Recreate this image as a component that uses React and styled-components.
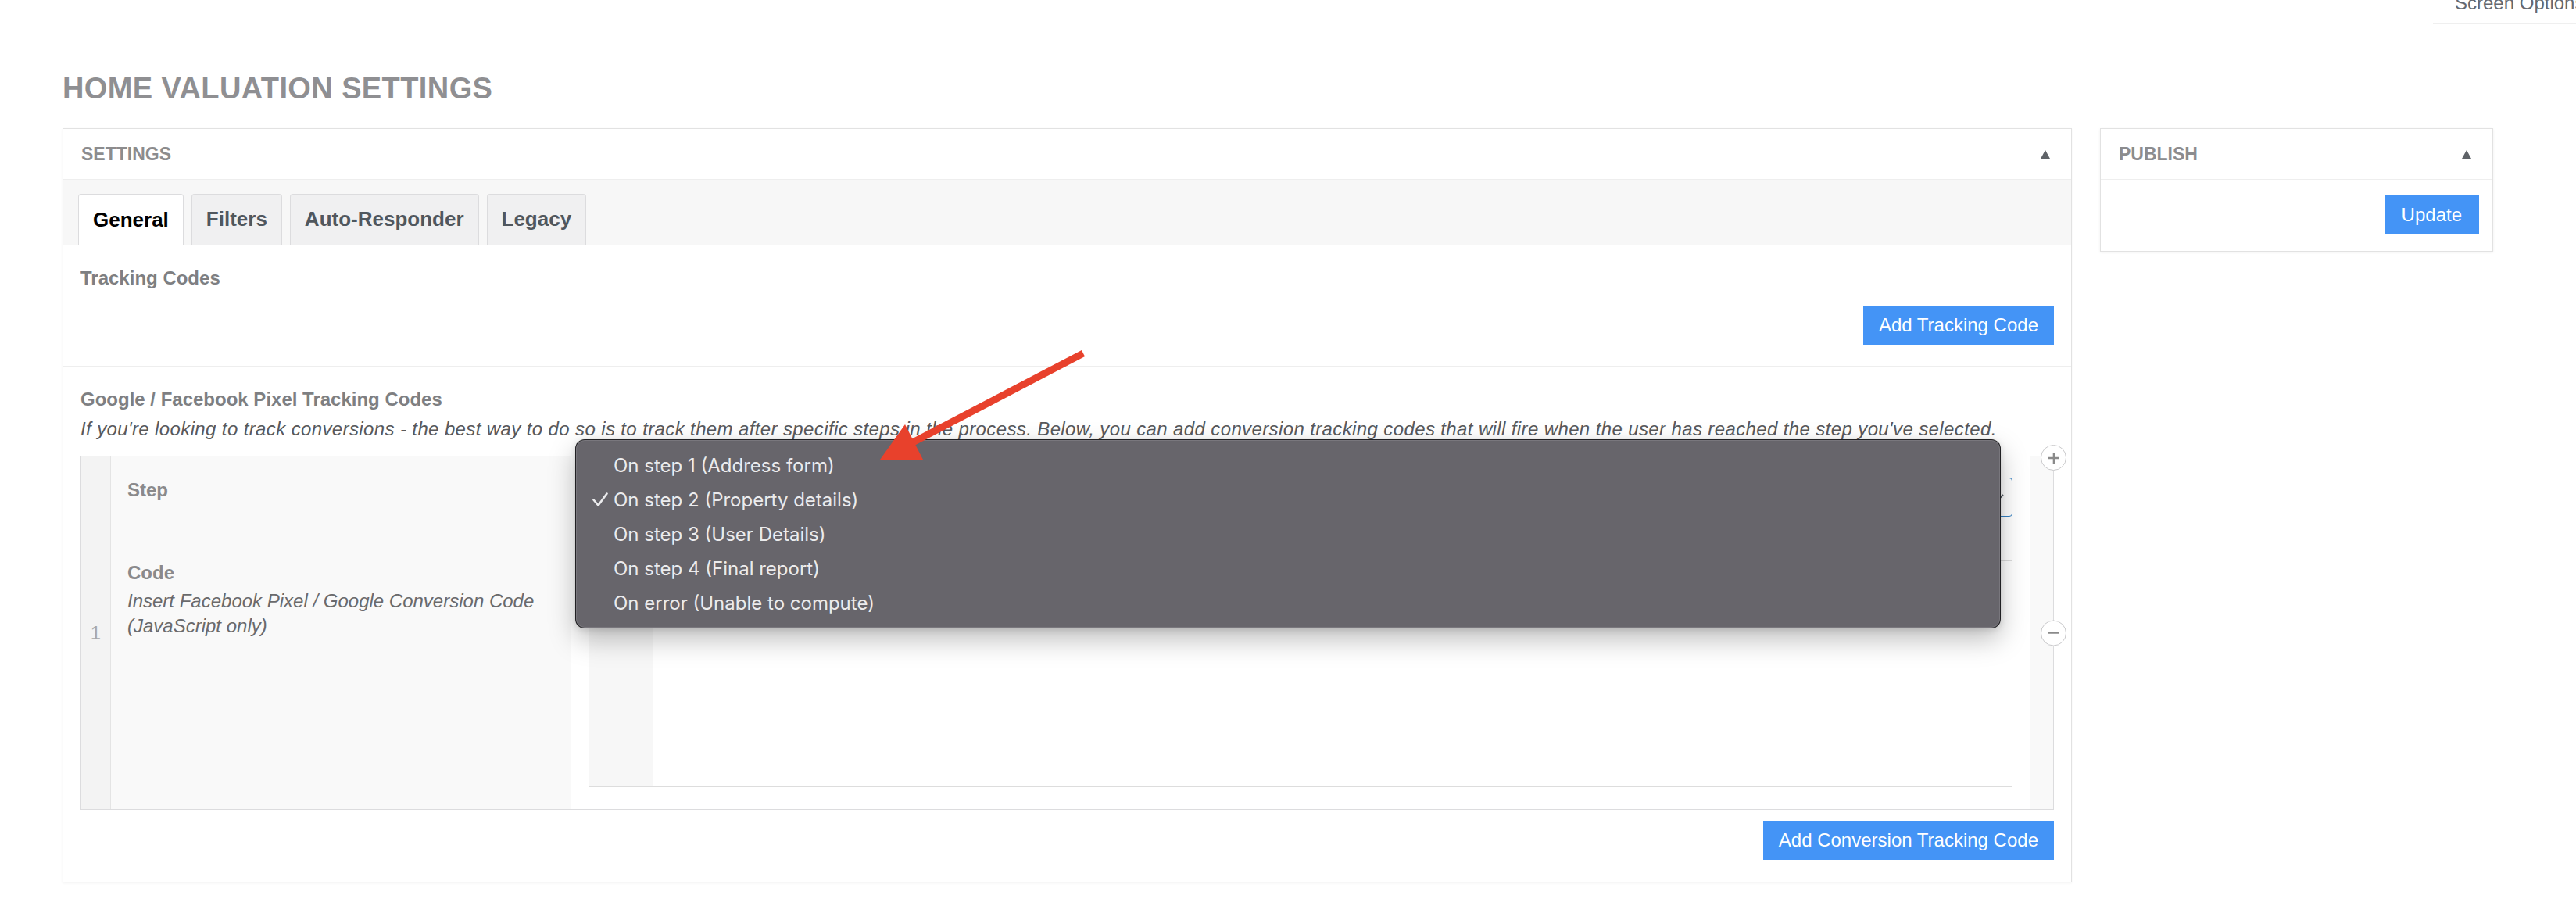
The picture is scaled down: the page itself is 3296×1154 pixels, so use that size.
import styled, { createGlobalStyle } from "styled-components";

const GlobalStyle = createGlobalStyle`
  html, body {
    margin: 0;
    padding: 0;
    background: #fff;
    overflow: hidden;
  }
  body {
    font-family: "Liberation Sans", Arial, sans-serif;
    color: #3c434a;
  }
  * { box-sizing: border-box; }
`;

const STEPS = [
  "On step 1 (Address form)",
  "On step 2 (Property details)",
  "On step 3 (User Details)",
  "On step 4 (Final report)",
  "On error (Unable to compute)",
];
const SELECTED = 1;

function App() {
  return (
    <>
      <GlobalStyle />
      <Page>
        <ScreenMeta>
          <ScreenTab>Screen Options</ScreenTab>
        </ScreenMeta>

        <Title>HOME VALUATION SETTINGS</Title>

        <Columns>
          <Postbox>
            <PostboxHeader>
              <HeaderTitle>SETTINGS</HeaderTitle>
              <Toggle />
            </PostboxHeader>

            <TabBar>
              <Tab $active>General</Tab>
              <Tab>Filters</Tab>
              <Tab>Auto-Responder</Tab>
              <Tab>Legacy</Tab>
            </TabBar>

            <FieldBlock $divider>
              <FieldLabel>Tracking Codes</FieldLabel>
              <Actions $gap={20}>
                <Button>Add Tracking Code</Button>
              </Actions>
            </FieldBlock>

            <FieldBlock>
              <FieldLabel>Google / Facebook Pixel Tracking Codes</FieldLabel>
              <Description>
                If you're looking to track conversions - the best way to do so is to track them after specific steps in the process. Below, you can add conversion tracking codes that will fire when the user has reached the step you've selected.
              </Description>

              <Repeater>
                <RowHandle>1</RowHandle>
                <Fields>
                  <Field>
                    <Label>
                      <LabelText>Step</LabelText>
                    </Label>
                    <Input>
                      {/* native select, open: its value sits under the menu */}
                      <Select>
                        <Chevron />
                        <Menu>
                          {STEPS.map((s, i) => (
                            <MenuItem key={s}>
                              <CheckSlot>{i === SELECTED && <Check />}</CheckSlot>
                              <span>{s}</span>
                            </MenuItem>
                          ))}
                        </Menu>
                      </Select>
                    </Input>
                  </Field>
                  <Field $border>
                    <Label>
                      <LabelText>Code</LabelText>
                      <Instructions>
                        Insert Facebook Pixel / Google Conversion Code (JavaScript only)
                      </Instructions>
                    </Label>
                    <Input>
                      <Editor>
                        <Gutter />
                        <EditorBody />
                      </Editor>
                    </Input>
                  </Field>
                </Fields>
                <RemoveHandle>
                  <RoundIcon $top>
                    <PlusIcon />
                  </RoundIcon>
                  <RoundIcon>
                    <MinusIcon />
                  </RoundIcon>
                </RemoveHandle>
              </Repeater>

              <Actions $gap={14}>
                <Button>Add Conversion Tracking Code</Button>
              </Actions>
            </FieldBlock>
          </Postbox>

          <Postbox $side>
            <PostboxHeader>
              <HeaderTitle>PUBLISH</HeaderTitle>
              <Toggle />
            </PostboxHeader>
            <PublishBody>
              <Button $wide>Update</Button>
            </PublishBody>
          </Postbox>
        </Columns>

        <ArrowLayer viewBox="0 0 3296 1154">
          <line x1="1386" y1="452" x2="1164" y2="568" stroke="#e8412c" strokeWidth="9" />
          <polygon points="1126,588 1158,543 1181,588" fill="#e8412c" />
        </ArrowLayer>
      </Page>
    </>
  );
}

function Toggle() {
  return (
    <svg width="12" height="11" viewBox="0 0 12 11">
      <path d="M6 0 L12 11 L0 11 Z" fill="#5f6368" />
    </svg>
  );
}

function Chevron() {
  return (
    <ChevronIcon width="14" height="10" viewBox="0 0 14 10">
      <path d="M1 2 L7 8 L13 2" fill="none" stroke="#50575e" strokeWidth="2" />
    </ChevronIcon>
  );
}

function Check() {
  return (
    <svg width="20" height="18" viewBox="0 0 20 18">
      <path d="M1.5 9.5 L7.5 16.5 L18.5 1.5" fill="none" stroke="#ececee" strokeWidth="2.6" strokeLinecap="round" strokeLinejoin="round" />
    </svg>
  );
}

function PlusIcon() {
  return (
    <svg width="16" height="16" viewBox="0 0 16 16">
      <path d="M8 1 V15 M1 8 H15" stroke="#8a8a8a" strokeWidth="2.6" />
    </svg>
  );
}

function MinusIcon() {
  return (
    <svg width="16" height="16" viewBox="0 0 16 16">
      <path d="M1 8 H15" stroke="#8a8a8a" strokeWidth="2.6" />
    </svg>
  );
}

const Page = styled.div`
  position: relative;
  min-height: 1154px;
  padding: 0 106px 0 80px;
`;

const ScreenMeta = styled.div`
  display: flex;
  justify-content: flex-end;
  height: 31px;
  margin-right: -106px;
  overflow: hidden;
`;

const ScreenTab = styled.div`
  width: 183px;
  display: flex;
  align-items: flex-end;
  padding: 0 0 14px 28px;
  border-bottom: 1px solid #efefef;
  font-size: 24px;
  line-height: 24px;
  color: #646970;
  white-space: nowrap;
  overflow: hidden;
`;

const Title = styled.h1`
  margin: 60px 0 29px;
  font-size: 38px;
  line-height: 44px;
  font-weight: 700;
  letter-spacing: 0.4px;
  color: #8f8f92;
`;

const Columns = styled.div`
  display: grid;
  grid-template-columns: 1fr 503px;
  gap: 36px;
  align-items: start;
`;

const Postbox = styled.section`
  background: #fff;
  border: 1px solid #e2e2e2;
  box-shadow: 0 1px 3px rgba(0, 0, 0, ${(p) => (p.$side ? 0.07 : 0.05)});
`;

const PostboxHeader = styled.div`
  height: 65px;
  display: flex;
  align-items: center;
  justify-content: space-between;
  padding: 0 27px 0 23px;
  border-bottom: 1px solid #eeeeee;
`;

const HeaderTitle = styled.h2`
  margin: 0;
  font-size: 23px;
  line-height: 1;
  font-weight: 700;
  color: #8c8c8e;
`;

const TabBar = styled.div`
  display: flex;
  align-items: flex-start;
  gap: 10px;
  padding: 18px 0 0 19px;
  background: #f7f7f7;
  border-bottom: 1px solid #dcdcde;
`;

const Tab = styled.div`
  height: ${(p) => (p.$active ? 66 : 65)}px;
  margin-bottom: ${(p) => (p.$active ? -1 : 0)}px;
  display: flex;
  align-items: center;
  padding: 0 18px 1px;
  border: 1px solid #dcdcde;
  border-bottom: none;
  border-radius: 4px 4px 0 0;
  background: ${(p) => (p.$active ? "#fff" : "#f0f0f1")};
  color: ${(p) => (p.$active ? "#000" : "#50575e")};
  font-size: 26px;
  font-weight: 700;
`;

const FieldBlock = styled.div`
  padding: 27px 22px 27px;
  border-bottom: 1px solid ${(p) => (p.$divider ? "#eeeeee" : "transparent")};
  &:first-of-type {
    padding-bottom: 28px;
  }
`;

const FieldLabel = styled.div`
  font-size: 24px;
  line-height: 30px;
  font-weight: 700;
  color: #7e7f82;
`;

const Description = styled.p`
  margin: 8px 0 19px;
  font-size: 24px;
  line-height: 30px;
  font-style: italic;
  letter-spacing: 0.38px;
  color: #58595c;
  white-space: nowrap;
`;

const Actions = styled.div`
  display: flex;
  justify-content: flex-end;
  margin-top: ${(p) => p.$gap}px;
`;

const Button = styled.button`
  height: 50px;
  padding: 0 ${(p) => (p.$wide ? 22 : 20)}px;
  border: none;
  border-radius: 0;
  background: #4494f6;
  color: #fff;
  font-family: inherit;
  font-size: 24px;
  cursor: pointer;
`;

const Repeater = styled.div`
  display: grid;
  grid-template-columns: 38px 1fr 30px;
  border: 1px solid #dcdcde;
`;

const RowHandle = styled.div`
  display: flex;
  align-items: center;
  justify-content: center;
  background: #f3f3f3;
  border-right: 1px solid #e4e4e4;
  color: #a7a7a9;
  font-size: 24px;
`;

const Fields = styled.div`
  display: flex;
  flex-direction: column;
`;

const Field = styled.div`
  display: grid;
  grid-template-columns: 589px 1fr;
  border-top: ${(p) => (p.$border ? "1px solid #eeeeee" : "none")};
`;

const Label = styled.div`
  padding: 28px 21px;
  background: #f9f9f9;
  border-right: 1px solid #eeeeee;
`;

const LabelText = styled.div`
  font-size: 24px;
  line-height: 30px;
  font-weight: 700;
  color: #8a8a8c;
`;

const Instructions = styled.p`
  margin: 5px 0 0;
  font-size: 24px;
  line-height: 32px;
  font-style: italic;
  color: #6a6a6c;
`;

const Input = styled.div`
  padding: 27px 22px 28px;
`;

const Select = styled.div`
  position: relative;
  height: 50px;
  display: flex;
  align-items: center;
  justify-content: flex-end;
  padding: 0 10px;
  border: 1px solid #3582c4;
  border-radius: 4px;
  background: #fff;
`;

const ChevronIcon = styled.svg`
  display: block;
`;

const Menu = styled.div`
  position: absolute;
  left: -18px;
  right: 14px;
  top: -50px;
  z-index: 10;
  padding: 10px 0;
  background: #67656b;
  border: 1px solid rgba(20, 20, 22, 0.85);
  border-radius: 12px;
  box-shadow: inset 0 0 0 1px rgba(255, 255, 255, 0.12), 0 14px 34px rgba(0, 0, 0, 0.26), 0 2px 8px rgba(0, 0, 0, 0.12);
  font-family: Inter, "Liberation Sans", sans-serif;
`;

const MenuItem = styled.div`
  height: 44px;
  display: grid;
  grid-template-columns: 48px 1fr;
  align-items: center;
  font-size: 24px;
  color: #ebebed;
`;

const CheckSlot = styled.span`
  justify-self: end;
  width: 20px;
  margin-right: 7px;
  display: flex;
`;

const Editor = styled.div`
  height: 290px;
  display: flex;
  border: 1px solid #dddddd;
`;

const Gutter = styled.div`
  width: 82px;
  background: #f7f7f7;
  border-right: 1px solid #dddddd;
`;

const EditorBody = styled.div`
  flex: 1;
  background: #fff;
`;

const RemoveHandle = styled.div`
  position: relative;
  background: #f9f9f9;
  border-left: 1px solid #e1e1e1;
`;

const RoundIcon = styled.span`
  position: absolute;
  right: -17px;
  top: ${(p) => (p.$top ? "-15px" : "50%")};
  transform: ${(p) => (p.$top ? "none" : "translateY(-50%)")};
  width: 33px;
  height: 33px;
  display: flex;
  align-items: center;
  justify-content: center;
  border: 1px solid #c9c9cb;
  border-radius: 50%;
  background: #fff;
`;

const PublishBody = styled.div`
  display: flex;
  justify-content: flex-end;
  padding: 20px 17px 21px;
`;

const ArrowLayer = styled.svg`
  position: absolute;
  left: 0;
  top: 0;
  width: 3296px;
  height: 1154px;
  z-index: 20;
  pointer-events: none;
`;

export default App;
